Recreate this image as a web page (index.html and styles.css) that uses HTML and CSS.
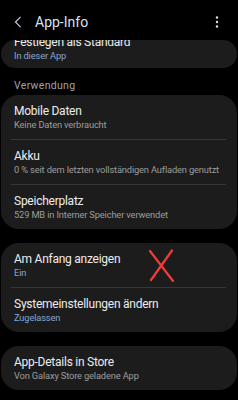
FILE: index.html
```html
<!DOCTYPE html>
<html lang="de">
<head>
<meta charset="utf-8">
<title>App-Info</title>
<link rel="stylesheet" href="styles.css">
</head>
<body>
<div class="screen">
  <header class="topbar">
    <svg class="back" width="8" height="12" viewBox="0 0 8 12"><path d="M6.5 0.8 L1.5 6 L6.5 11.2" fill="none" stroke="#c9d3e0" stroke-width="1.1"/></svg>
    <h1 class="title">App-Info</h1>
    <svg class="more" width="4" height="14" viewBox="0 0 4 14"><circle cx="2" cy="2.5" r="1.2" fill="#d8e2ee"/><circle cx="2" cy="7" r="1.2" fill="#d8e2ee"/><circle cx="2" cy="11.5" r="1.2" fill="#d8e2ee"/></svg>
  </header>
  <main class="content">
    <section class="card card-clipped">
      <div class="item item-shifted">
        <div class="item-title">Festlegen als Standard</div>
        <div class="item-sub blue">In dieser App</div>
      </div>
    </section>
    <div class="section-label">Verwendung</div>
    <section class="card">
      <div class="item">
        <div class="item-title">Mobile Daten</div>
        <div class="item-sub">Keine Daten verbraucht</div>
      </div>
      <div class="divider"></div>
      <div class="item">
        <div class="item-title">Akku</div>
        <div class="item-sub">0 % seit dem letzten vollständigen Aufladen genutzt</div>
      </div>
      <div class="divider"></div>
      <div class="item">
        <div class="item-title">Speicherplatz</div>
        <div class="item-sub">529 MB in Interner Speicher verwendet</div>
      </div>
    </section>
    <section class="card card-gap">
      <div class="item">
        <div class="item-title">Am Anfang anzeigen</div>
        <div class="item-sub blue">Ein</div>
      </div>
      <div class="divider"></div>
      <div class="item">
        <div class="item-title">Systemeinstellungen ändern</div>
        <div class="item-sub blue">Zugelassen</div>
      </div>
      <svg class="cross" width="28" height="34" viewBox="0 0 28 34"><path d="M2 2 L25 32 M24 1.5 L3 31" stroke="#f03c3c" stroke-width="2.2" stroke-linecap="round" fill="none"/></svg>
    </section>
    <section class="card card-gap">
      <div class="item">
        <div class="item-title">App-Details in Store</div>
        <div class="item-sub">Von Galaxy Store geladene App</div>
      </div>
    </section>
  </main>
</div>
</body>
</html>
```
FILE: styles.css
```css
html, body {
  margin: 0;
  padding: 0;
  background: #000;
}
body {
  font-family: Roboto, "Noto Sans", "Liberation Sans", sans-serif;
  color: #e9e9e9;
}
.screen {
  width: 238px;
  height: 400px;
  overflow: hidden;
  background: #000;
}
.topbar {
  height: 40px;
  box-sizing: border-box;
  padding: 3px 0 0 0;
  display: flex;
  align-items: center;
}
.back {
  margin-left: 14px;
  flex: none;
}
.title {
  margin: 0 0 0 13px;
  font-size: 14px;
  font-weight: 400;
  color: #d6e2f2;
  flex: 1;
}
.more {
  margin-right: 19px;
  flex: none;
}
.content {
  padding: 0 1px;
}
.card {
  background: #1c1c1c;
  border-radius: 18px;
  position: relative;
}
.card-gap {
  margin-top: 14px;
}
.card-clipped {
  height: 28px;
  overflow: hidden;
}
.item-shifted {
  margin-top: -14px;
}
.item {
  padding: 9px 14px 8px 13px;
}
.item-title {
  font-size: 12px;
  line-height: 15px;
  letter-spacing: -0.25px;
  color: #ececec;
  white-space: nowrap;
}
.item-sub {
  font-size: 9.3px;
  line-height: 12px;
  letter-spacing: -0.15px;
  color: #9c9c9c;
  white-space: nowrap;
}
.item-sub.blue {
  color: #86a6d6;
}
.divider {
  height: 1px;
  background: #353535;
  margin: 0 11px 0 10px;
}
.section-label {
  height: 27px;
  box-sizing: border-box;
  padding: 11px 14px 0 13px;
  font-size: 10.5px;
  line-height: 14px;
  letter-spacing: 0.3px;
  color: #a2a2a2;
}
.cross {
  position: absolute;
  left: 147px;
  top: 6px;
}
```
